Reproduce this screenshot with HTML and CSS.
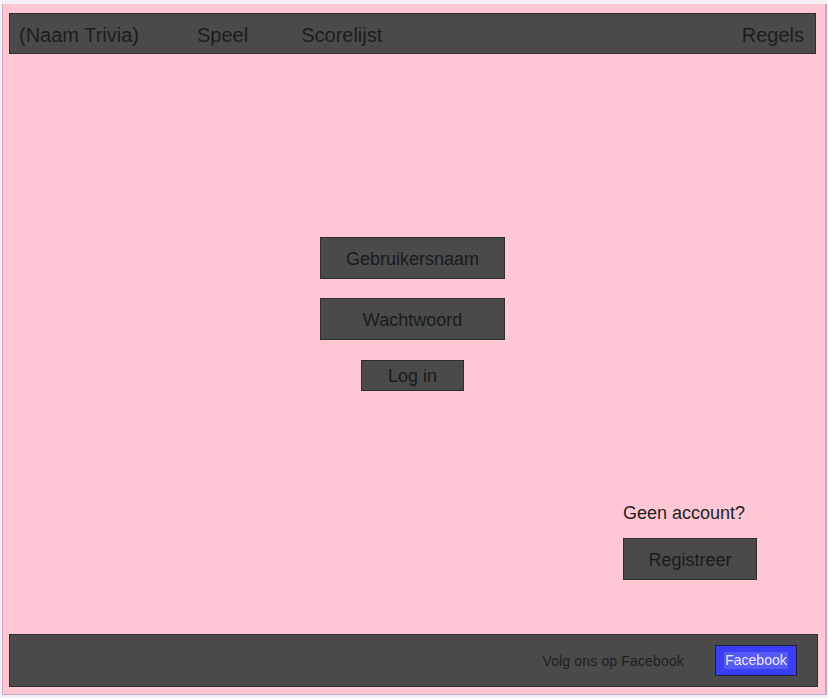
FILE: index.html
```html
<!DOCTYPE html>
<html lang="nl">
<head>
<meta charset="utf-8">
<title>(Naam Trivia)</title>
<link rel="stylesheet" href="styles.css">
</head>
<body>
<div class="frame">
  <header class="topbar">
    <span class="brand">(Naam Trivia)</span>
    <nav class="nav">
      <span class="nav-item">Speel</span>
      <span class="nav-item">Scorelijst</span>
    </nav>
    <span class="rules">Regels</span>
  </header>
  <main class="main">
    <div class="login">
      <div class="field">Gebruikersnaam</div>
      <div class="field">Wachtwoord</div>
      <div class="btn-login">Log in</div>
    </div>
    <div class="register">
      <div class="register-label">Geen account?</div>
      <div class="btn-register">Registreer</div>
    </div>
  </main>
  <footer class="footer">
    <span class="follow">Volg ons op Facebook</span>
    <span class="fb-btn"><span class="fb-text">Facebook</span></span>
  </footer>
</div>
</body>
</html>
```
FILE: styles.css
```css
* { box-sizing: border-box; }
html, body { margin: 0; padding: 0; background: #f4f1f6; }
body {
  width: 828px;
  height: 698px;
  overflow: hidden;
  font-family: "Liberation Sans", Arial, sans-serif;
  color: #222;
}
.frame {
  margin: 4px 0 0 2px;
  width: 825px;
  height: 691px;
  background: #ffc7d3;
  border-left: 1px solid #d2a9c6;
  border-right: 2px solid #c8a2c9;
  border-bottom: 1px solid #c6a8cc;
  padding: 9px 9px 7px 6px;
  display: flex;
  flex-direction: column;
}
.topbar {
  height: 41px;
  width: 807px;
  background: #4a4a4a;
  border: 1px solid #2e2e2e;
  display: flex;
  align-items: center;
  padding: 3px 11px 0 9px;
  font-size: 20px;
  color: #1d1d1d;
}
.nav { display: flex; gap: 53px; margin-left: 58px; }
.rules { margin-left: auto; }
.main {
  flex: 1;
  display: flex;
  flex-direction: column;
}
.login {
  margin-top: 183px;
  margin-left: 311px;
  width: 185px;
  display: flex;
  flex-direction: column;
  align-items: center;
}
.field, .btn-login, .btn-register {
  background: #4a4a4a;
  border: 1px solid #2e2e2e;
  color: #1a1a1a;
  font-size: 18px;
  display: flex;
  align-items: center;
  justify-content: center;
  padding-top: 2px;
}
.field { width: 185px; height: 42px; margin-bottom: 19px; }
.field + .field { margin-bottom: 20px; }
.btn-login { width: 103px; height: 31px; }
.register {
  margin-top: 111px;
  margin-left: 614px;
  display: flex;
  flex-direction: column;
  align-items: flex-start;
}
.register-label { font-size: 18px; color: #1f1f1f; height: 22px; line-height: 22px; }
.btn-register { margin-top: 14px; width: 134px; height: 42px; }
.footer {
  height: 53px;
  width: 809px;
  background: #4a4a4a;
  border: 1px solid #2e2e2e;
  display: flex;
  align-items: center;
  justify-content: flex-end;
  padding-right: 20px;
  font-size: 14px;
  color: #1f1f1f;
}
.follow { margin-right: 31px; letter-spacing: 0.15px; }
.fb-btn {
  width: 82px;
  height: 31px;
  background: #3a3ff6;
  border: 1px solid #1c1c3a;
  display: flex;
  align-items: center;
  justify-content: center;
}
.fb-text {
  font-size: 14px;
  color: #eceaff;
  background: #5559f6;
  line-height: 17px;
  padding: 0 1px;
}
```
